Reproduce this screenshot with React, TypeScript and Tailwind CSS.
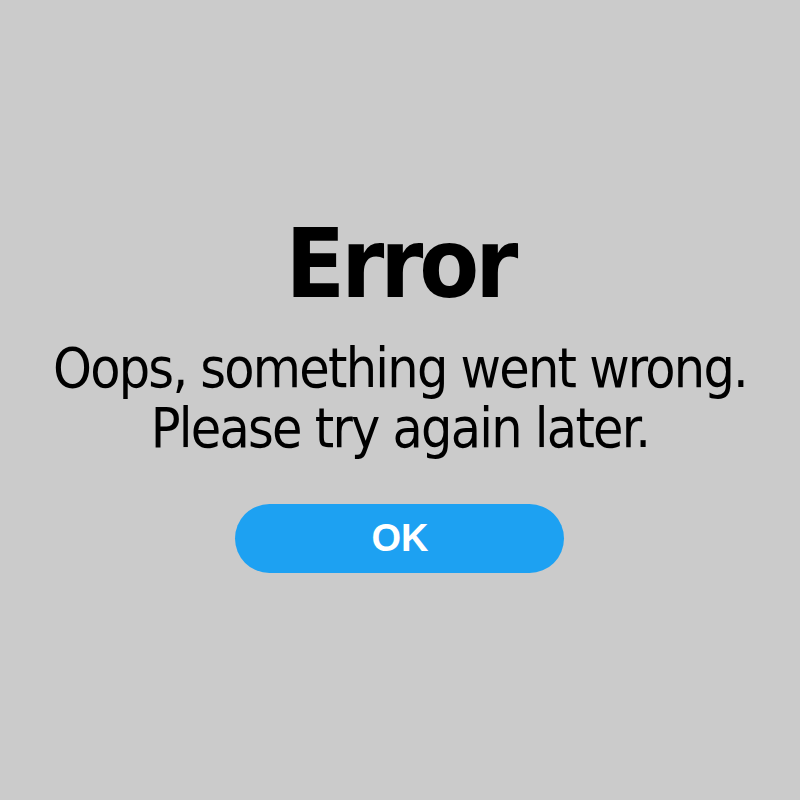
import React from 'react';

const App: React.FC = () => {
  return (
    <div className="w-full min-h-screen bg-[#cbcbcb] flex flex-col items-center justify-center font-['DejaVu_Sans_Condensed','DejaVu_Sans',sans-serif]">
      <div className="flex flex-col items-center text-center text-black pb-[12px]">
        <h1 className="text-[97px] leading-none font-bold tracking-[-4px] mb-[26px]">Error</h1>
        <p className="text-[55px] leading-[60px] tracking-[-1.75px]">
          Oops, something went wrong.
          <br />
          Please try again later.
        </p>
        <button className="mt-[46px] w-[329px] h-[69px] rounded-full bg-[#1da1f2] text-white text-[38px] font-bold font-['Liberation_Sans',Arial,sans-serif]">
          OK
        </button>
      </div>
    </div>
  );
};

export default App;
